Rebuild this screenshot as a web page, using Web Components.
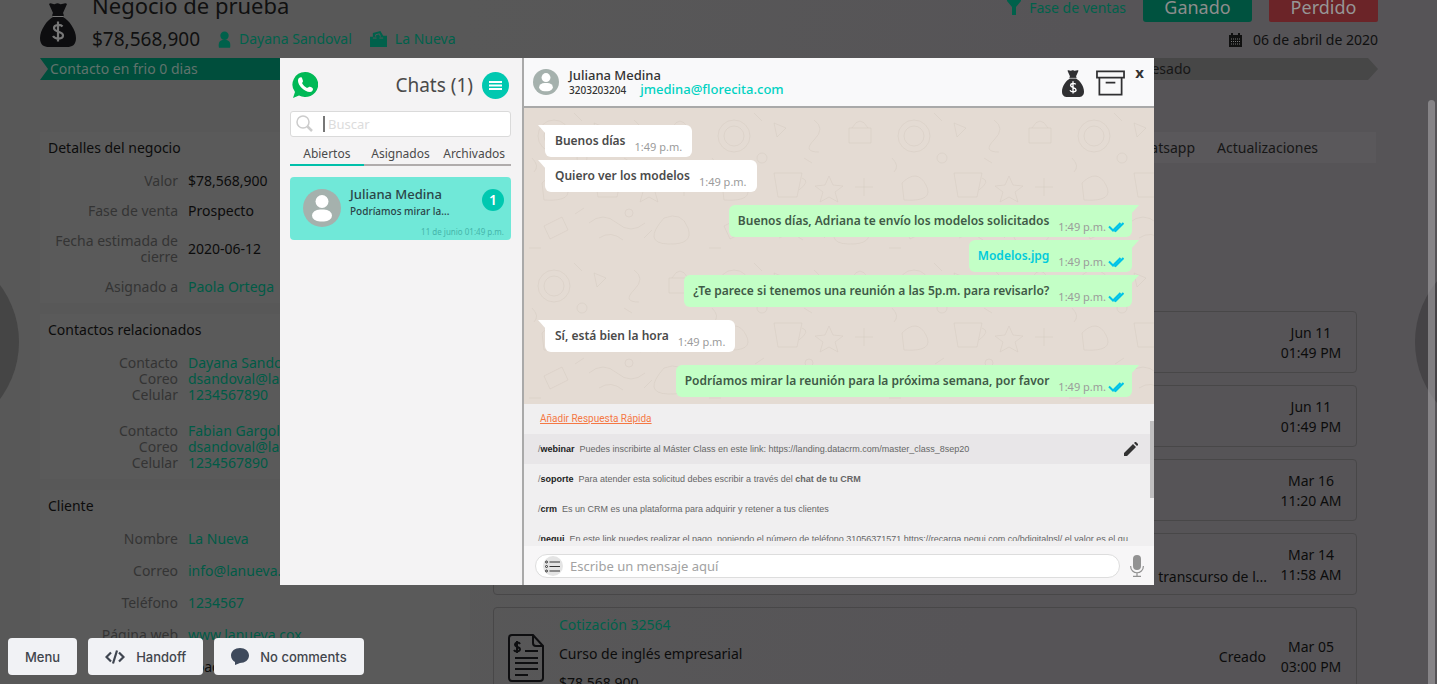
<!DOCTYPE html>
<html lang="es">
<head>
<meta charset="utf-8">
<title>Negocio de prueba</title>
<style>
html,body{margin:0;height:100%;overflow:hidden;background:#3a393a}
body{font-family:"Noto Sans","Open Sans",sans-serif;font-size:14px;color:#161616}
</style>
</head>
<body>
<crm-app></crm-app>
<script>
const icons = {
  bag: '<svg viewBox="0 0 36 44"><path fill="currentColor" d="M9 1c2-2 4 1 6 0s3-1 5 0 5-2 7 0l-4 9c1 2 1 3 0 4 6 3 13 13 13 21 0 7-4 9-9 9H9c-5 0-9-2-9-9 0-8 7-18 13-21-1-1-1-2 0-4z"/><path d="M12.500 13.500h11" stroke="var(--cut)" stroke-width="1"/><path fill="none" stroke="var(--cut)" stroke-width="2.200" d="M22.500 23.500c-2-2.500-8.500-2-8.500 1.500 0 4.500 9 3 9 7.500 0 4-8 4-10 .5M18 18.500v20"/></svg>',
  person: '<svg viewBox="0 0 14 18"><circle cx="7" cy="5" r="4.500" fill="currentColor"/><path fill="currentColor" d="M1 18c-1-6 1-8 4-8.500h4c3 .5 5 2.500 4 8.500z"/></svg>',
  company: '<svg viewBox="0 0 18 17"><path fill="currentColor" d="M0 6h3V2l8-2 3 5h4v12H0z"/><path d="M6 6V4l4-1 1 3M3 7.500h4M10 7.500h4" stroke="#585858" fill="none"/></svg>',
  funnel: '<svg viewBox="0 0 14 16"><path fill="currentColor" d="M0 0h14v2L9 8v8H5V8L0 2z"/></svg>',
  calendar: '<svg viewBox="0 0 13 14"><path fill="currentColor" d="M0 2h2V0h2v2h5V0h2v2h2v12H0z"/><path stroke="#777" stroke-dasharray="1 1" d="M2 6h9M2 8.500h9M2 11h9"/></svg>',
  quote: '<svg viewBox="0 0 36 48" fill="none" stroke="currentColor" stroke-width="2"><path d="M4 1h21l10 11v32q0 3-3 3H4q-3 0-3-3V4q0-3 3-3zM25 1v8q0 3 3 3h7M17 17h13M7 24h23M7 29h23M7 35h23M7 41h13"/><path d="M12 10c-1-2-5-2-5 1 0 2 5 2 5 4 0 3-5 3-6 1M9 7v12"/></svg>',
  whatsapp: '<svg viewBox="0 0 26 26"><path fill="#00b956" d="M13 0a13 12.500 0 1 1-6 23.500L1 26l2-6A12.500 12.500 0 0 1 13 0z"/><path fill="#fff" d="M7 6c1-1 3-1 3 0l1 3c0 1-1 2-1 2 1 2 3 4 5 5l2-1c1-1 4 1 4 2s-1 3-3 3C12 20 6 13 6 9c0-1 0-2 1-3z"/></svg>',
  lines: '<svg viewBox="0 0 13 9"><path d="M0 1h13M0 4.500h13M0 8h13" stroke="#fff" stroke-width="1.800"/></svg>',
  search: '<svg viewBox="0 0 18 18" fill="none" stroke="#ccc" stroke-width="1.500"><circle cx="7" cy="7" r="6"/><path d="m11.500 11.500 4.500 4.500" stroke-width="2.500"/></svg>',
  avatar: '<svg viewBox="0 0 38 38"><circle cx="19" cy="19" r="19" fill="#a5b1ad"/><circle cx="19" cy="12.500" r="6.500" fill="#fff"/><rect x="9" y="20.500" width="20" height="12" rx="8" ry="6" fill="#fff"/></svg>',
  archive: '<svg viewBox="0 0 30 26" fill="none" stroke="#303032" stroke-width="1.800"><path d="M1 1h28v6.500H1zM3.500 7.500V25h23V7.500M10 12.500h10"/></svg>',
  ticks: '<svg viewBox="0 0 16 12" fill="none" stroke="#00c3e8" stroke-width="2"><path d="m1 5.500 4 4L12.500 2M6.500 9.500l1 .5L15.500 2"/></svg>',
  pencil: '<svg viewBox="0 0 14 14" fill="#333"><path d="M0 14v-3l9-9 3 3-9 9zM10 1l1-1q.5-.3 1 0l2 2q.3.5 0 1l-1 1z"/></svg>',
  list: '<svg viewBox="0 0 20 20"><circle cx="10" cy="10" r="10" fill="#e4e4e4"/><g fill="none" stroke="#333"><path d="M6.500 6H17M6.500 10.500H17M6.500 15H17" stroke-width="1.200"/><circle cx="3.500" cy="6" r="1"/><circle cx="3.500" cy="10.500" r="1"/><circle cx="3.500" cy="15" r="1"/></g></svg>',
  mic: '<svg viewBox="0 0 14 22"><rect x="3" width="8" height="15" rx="4" fill="#929292"/><path d="M.6 11c0 9 12.800 9 12.800 0M7 17.500V21M3 21.400h8" fill="none" stroke="#929292" stroke-width="1.200"/></svg>',
  code: '<svg viewBox="0 0 20 14" fill="none" stroke="#3f4550" stroke-width="2.200"><path d="M6 2.500 1.500 7 6 11.500M14 2.500 18.500 7 14 11.500M12 .5 8 13.500"/></svg>',
  comment: '<svg viewBox="0 0 18 17" fill="#3f4a5c"><path d="M9 0c5 0 9 3 9 7.500S14 15 9 15l-5 2v-3C2 13 0 10.500 0 7.500 0 3 4 0 9 0z"/></svg>'
};

function define(name, css, html) {
  customElements.define(name, class extends HTMLElement {
    connectedCallback() {
      if (this.shadowRoot) return;
      const root = this.attachShadow({ mode: 'open' });
      root.innerHTML = `<style>*{box-sizing:border-box}a{color:inherit;text-decoration:none}button{font:inherit;color:inherit;border:0;padding:0;background:none}${css}</style>` +
        (typeof html === 'function' ? html(this) : html);
    }
  });
}
const at = (el, name) => el.getAttribute(name) || '';

define('ui-icon', `:host{display:block;flex:none;width:var(--w,16px);height:var(--h,16px)}svg{display:block;width:100%;height:100%}`,
  el => icons[at(el, 'name')]);

/* ---------- deal page ---------- */
define('deal-header', `
:host{display:flex;justify-content:space-between;height:66px;padding:0 59px 0 40px;color:#101010}
.left,.who,.line,.actions,.date{display:flex}
.left{gap:16px}
.bag{--w:36px;--h:44px;--cut:#777;margin-top:11px;color:#0d0d0f}
h1{font-size:22px;line-height:26px;font-weight:400;margin:0;padding-top:0}
.line{align-items:center;gap:18px;height:28px;margin-top:7px;color:#00614b;line-height:20px}
strong{font-size:19px;font-weight:400;color:#101010;line-height:28px}
.line a{display:flex;align-items:center;gap:8px}
.line .who{--w:13px;--h:17px}.line .co{--w:17px;--h:16px}
.right{display:flex;flex-direction:column;align-items:flex-end}
.actions{gap:17px;align-items:center;color:#00614b}
.actions span{display:flex;align-items:center;gap:8px;--w:14px;--h:16px}
button{width:109px;height:30px;border-radius:0 0 3px 3px;font-size:18px;background:#00523f;color:#8d8d8d}
button.lost{background:#6b2428;color:#969696;border-radius:0 0 2px 2px}
.date{align-items:center;gap:11px;line-height:20px;margin-top:8px;--w:13px;--h:14px}
`, `
<div class="left"><ui-icon class="bag" name="bag"></ui-icon><div><h1>Negocio de prueba</h1>
<div class="line"><strong>$78,568,900</strong><a class="who" href="#"><ui-icon name="person"></ui-icon>Dayana Sandoval</a><a class="co" href="#"><ui-icon name="company"></ui-icon>La Nueva</a></div></div></div>
<div class="right"><div class="actions"><span><ui-icon name="funnel"></ui-icon>Fase de ventas</span><button>Ganado</button><button class="lost">Perdido</button></div>
<div class="date"><ui-icon name="calendar"></ui-icon>06 de abril de 2020</div></div>`);

define('stage-bar', `
:host{display:flex;height:22px;margin:0 59px 0 40px;line-height:22px;clip-path:polygon(0 0,calc(100% - 10px) 0,100% 50%,calc(100% - 10px) 100%,0 100%,8px 50%)}
span{flex:1}.on{background:#004e3c;color:#61736d;padding-left:10px}.off{background:#474747;text-align:right;padding-right:187px}
`, `<span class="on">Contacto en frio 0 dias</span><span class="off">Interesado</span>`);

define('info-panel', `
:host{display:block;background:#5a5a5a;padding:8px}
h2{margin:0 0 17px;font-size:14px;line-height:16px;font-weight:400;color:#0c0c0c}
div{display:flex;flex-direction:column;gap:var(--gap,14px)}
`, el => `<h2>${at(el, 'heading')}</h2><div><slot></slot></div>`);

define('info-row', `
:host{display:grid;grid-template-columns:130px 1fr;gap:10px;align-items:center;line-height:16px;white-space:nowrap}
.k{text-align:right;color:#343434;white-space:normal}
.v{color:#0c0c0c}a{color:#005b46}
`, el => `<span class="k">${at(el, 'label')}</span><span class="v">${el.hasAttribute('link') ? `<a href="#">${at(el, 'value')}</a>` : at(el, 'value')}</span>`);

define('info-group', `:host{display:block}`, `<slot></slot>`);

define('activity-card', `
:host{display:flex;align-items:center;min-height:62px;padding:2px 14px 0 14px;border:1px solid #484748;border-radius:4px;line-height:20px;color:#0c0c0c}
.main{flex:1;min-width:0;display:flex}
time{width:62px;text-align:center}
.note{margin:24px 13px 0 0}
:host([tall]){min-height:100px;padding-top:0}
:host([tall]) .note{margin:0 14px 0 0}
`, el => `<div class="main"><slot></slot></div><span class="note">${at(el, 'note')}</span><time>${at(el, 'day')}<br>${at(el, 'hour')}</time>`);

define('quote-summary', `
:host{display:flex;gap:15px;--w:36px;--h:48px;align-items:center;padding-top:2px}
p{margin:0 0 9px;line-height:20px}a{color:#00614b}ui-icon{color:#0e0e10}
`, `<ui-icon name="quote"></ui-icon><div><p><a href="#">Cotización 32564</a></p><p>Curso de inglés empresarial</p><p>$78,568,900</p></div>`);

define('deal-page', `
:host{display:block;height:100vh;overflow:hidden;background:linear-gradient(100deg,#585858 30%,#565457 70%)}
.scroll{margin-top:-8px}
.body{display:grid;grid-template-columns:minmax(0,430px) minmax(0,1fr);gap:23px;padding:52px 61px 0 40px}
.info{display:flex;flex-direction:column;gap:11px}
.tabs{display:flex;justify-content:flex-end;gap:22px;height:31px;align-items:center;padding-right:58px;background:#5a585b}
.cards{display:flex;flex-direction:column;gap:12px;margin:148px 19px 0 0}
`, `
<div class="scroll"><deal-header></deal-header><stage-bar></stage-bar>
<div class="body"><div class="info">
<info-panel heading="Detalles del negocio"><info-row label="Valor" value="$78,568,900"></info-row><info-row label="Fase de venta" value="Prospecto"></info-row><info-row label="Fecha estimada de cierre" value="2020-06-12"></info-row><info-row label="Asignado a" value="Paola Ortega" link></info-row></info-panel>
<info-panel heading="Contactos relacionados" style="--gap:20px">
<info-group><info-row label="Contacto" value="Dayana Sandoval" link></info-row><info-row label="Coreo" value="dsandoval@lanueva.com" link></info-row><info-row label="Celular" value="1234567890" link></info-row></info-group>
<info-group><info-row label="Contacto" value="Fabian Gargola" link></info-row><info-row label="Coreo" value="dsandoval@lanueva.com" link></info-row><info-row label="Celular" value="1234567890" link></info-row></info-group></info-panel>
<info-panel heading="Cliente" style="--gap:16px"><info-row label="Nombre" value="La Nueva" link></info-row><info-row label="Correo" value="info@lanueva.cox" link></info-row><info-row label="Teléfono" value="1234567" link></info-row><info-row label="Página web" value="www.lanueva.cox" link></info-row><info-row label="Ciudad" value="Soacha"></info-row></info-panel>
</div><div><nav class="tabs"><a href="#">Whatsapp</a><a href="#">Actualizaciones</a></nav>
<div class="cards"><activity-card day="Jun 11" hour="01:49 PM"></activity-card><activity-card day="Jun 11" hour="01:49 PM"></activity-card><activity-card day="Mar 16" hour="11:20 AM"></activity-card><activity-card day="Mar 14" hour="11:58 AM" note="el transcurso de l..."></activity-card><activity-card tall day="Mar 05" hour="03:00 PM" note="Creado"><quote-summary></quote-summary></activity-card></div></div></div></div>`);

/* ---------- chat dialog ---------- */
define('chat-item', `
:host{display:grid;grid-template-columns:38px 1fr auto;gap:0 9px;padding:8px 7px 0 13px;height:63px;background:#70e8d8;border-radius:4px;color:#2b4548}
ui-icon{--w:38px;--h:38px;margin-top:4px}
b,span,time{display:block}b{font-size:13px;line-height:18px;font-weight:500}
span{font-size:10px;line-height:17px;font-weight:500}
.n{width:22px;height:22px;margin-top:4px;border-radius:50%;background:#00c8b0;color:#fff;font-size:14px;font-style:normal;font-weight:600;line-height:22px;text-align:center}
time{grid-column:1/-1;text-align:right;font-size:8px;line-height:10px;color:#45b5aa;margin-top:-3px}
`, `<ui-icon name="avatar"></ui-icon><div><b>Juliana Medina</b><span>Podríamos mirar la...</span></div><i class="n">1</i><time>11 de junio 01:49 p.m.</time>`);

define('chat-list', `
:host{display:block;background:#f4f3f4;border-right:2px solid #a9a9a9;padding:13px 11px 0 10px;color:#4a4a4a}
header{display:flex;align-items:center;height:28px}
h2{margin:0 9px 0 auto;font-size:19px;font-weight:400;line-height:28px}
.wa{--w:26px;--h:26px;margin-left:2px}
.menu{width:27px;height:27px;border-radius:50%;background:#00c8b0;display:flex;align-items:center;justify-content:center;margin-right:2px;--w:13px;--h:9px}
label{display:flex;align-items:center;height:26px;margin-top:12px;border:1px solid #dadada;border-radius:3px;background:#fff;padding-left:5px;--w:18px;--h:18px}
label i{width:2px;height:16px;background:#777;margin:0 3px 0 9px}
input{flex:1;min-width:0;border:0;padding:0;background:none;font:13px/18px "Noto Sans",sans-serif;outline:0}
input::placeholder{color:#dcdcdc}
nav{display:grid;grid-template-columns:1fr 1fr 1fr;margin:6px 0 11px;font-size:12px;text-align:center}
nav a{line-height:22px;border-bottom:2px solid #b0acac;height:23px}
nav a.on{border-color:#00c0aa}
`, `<header><ui-icon class="wa" name="whatsapp"></ui-icon><h2>Chats (1)</h2><button class="menu" aria-label="Menú de chats"><ui-icon name="lines"></ui-icon></button></header>
<label><ui-icon name="search"></ui-icon><i></i><input placeholder="Buscar" aria-label="Buscar"></label>
<nav><a class="on" href="#">Abiertos</a><a href="#">Asignados</a><a href="#">Archivados</a></nav><chat-item></chat-item>`);

define('chat-header', `
:host{display:flex;height:50px;background:#f9f9fa;border-bottom:2px solid #a9a9a9;padding:0 10px 0 9px;color:#333}
.av{--w:26px;--h:26px;margin:11px 10px 0 0}
.who{flex:1;padding-top:9px}
b{display:block;font-size:13px;line-height:17px;font-weight:500}
.sub{display:flex;gap:14px;font-size:10px;font-weight:500;line-height:12px;align-items:center}
a{font-size:13px;line-height:12px;color:#00d2c2;margin-top:-2px}
button{flex:none}
.bag{--w:22px;--h:27px;--cut:#fff;color:#303032;margin:12px 12px 0 0}
.box{--w:29px;--h:26px;margin:12px 10px 0 0}
.x{font:700 15px/20px "Open Sans",sans-serif;align-self:flex-start;margin-top:4px}
`, `<ui-icon class="av" name="avatar"></ui-icon><div class="who"><b>Juliana Medina</b><div class="sub">3203203204 <a href="#">jmedina@florecita.com</a></div></div>
<ui-icon class="bag" name="bag"></ui-icon><ui-icon class="box" name="archive"></ui-icon><button class="x" aria-label="Cerrar">x</button>`);

define('chat-bubble', `
:host{display:flex;position:relative;align-self:flex-start;align-items:center;height:32px;padding:0 10px;gap:9px;background:#fff;border-radius:0 6px 6px 6px;color:#4a4a4a;font-size:12px;font-weight:600;line-height:20px;--w:16px;--h:12px}
:host([sent]){align-self:flex-end;background:#c3ffc6;border-radius:6px 0 6px 6px;padding:0 8px 0 9px;color:#3f5a46}
:host::before{content:"";position:absolute;top:0;left:-7px;width:8px;height:9px;background:#fff;clip-path:polygon(0 0,100% 0,100% 100%)}
:host([sent])::before{left:auto;right:-7px;background:#c3ffc6;clip-path:polygon(0 0,100% 0,0 100%)}
:host([gap]){margin-top:10px}
small{display:flex;align-items:center;gap:2px;font:11px/16px "Noto Sans",sans-serif;color:#9b9b9b;padding-top:11px}
`, el => `<span><slot></slot></span><small>1:49 p.m.${el.hasAttribute('sent') ? '<ui-icon name="ticks"></ui-icon>' : ''}</small>`);

define('chat-log', `
:host{display:flex;flex-direction:column;gap:3px;height:296px;padding:17px 22px 0 21px;background:#e4dbd3 url("data:image/svg+xml,%3Csvg xmlns='http://www.w3.org/2000/svg' width='180' height='150' fill='none' stroke='%23cfc5bc' stroke-opacity='.38'%3E%3Ccircle cx='30' cy='28' r='16'/%3E%3Ccircle cx='30' cy='28' r='10'/%3E%3Cpath d='m70 15 12 5-9 9zM110 12q12 8 0 20t5 12M145 20h22v15h-22zM148 20q8-14 16 0M18 75q15-15 24 2t-22 15zM70 65h28l-5 24H74zM98 70q9 3-3 12M125 68l4 9 10 1-8 6 3 10-9-5-9 5 3-10-8-6 10-1zM160 70v18M151 79h18M20 118l18-9 6 13-18 9zM65 115q14-12 28 0t28 0M75 130q12-8 24 2M140 110q18-7 24 10t-20 16-4-26M50 5l8 8M100 50l8 5M8 50q8 8 2 14M120 130l8-8M5 140h12M60 100l-9 6'/%3E%3Ccircle cx='58' cy='50' r='5'/%3E%3Ccircle cx='105' cy='105' r='4'/%3E%3C/svg%3E")}
chat-bubble a{color:#00cbdc}
`, `<chat-bubble>Buenos días</chat-bubble><chat-bubble>Quiero ver los modelos</chat-bubble>
<chat-bubble gap sent>Buenos días, Adriana te envío los modelos solicitados</chat-bubble>
<chat-bubble sent><a href="#">Modelos.jpg</a></chat-bubble><chat-bubble sent>¿Te parece si tenemos una reunión a las 5p.m. para revisarlo?</chat-bubble>
<chat-bubble gap>Sí, está bien la hora</chat-bubble><chat-bubble gap sent>Podríamos mirar la reunión para la próxima semana, por favor</chat-bubble>`);

define('quick-reply', `
:host{display:flex;flex:none;align-items:center;height:30px;gap:5px;padding:0 16px 0 14px;font:9px/12px "Liberation Sans",Arial,sans-serif;color:#666;--w:14px;--h:14px;white-space:nowrap}
:host([on]){background:#e8e6e8}
strong{color:#222}strong i{font-weight:400;font-style:normal;color:#777}
ui-icon{margin-left:auto}
`, el => `<strong><i>/</i>${at(el, 'key')}</strong><span><slot></slot></span>${el.hasAttribute('on') ? '<ui-icon name="pencil"></ui-icon>' : ''}`);

define('quick-replies', `
:host{display:block;position:relative;height:137px;overflow:hidden;background:#f0eff0}
.add{display:block;font:10px/30px Roboto,sans-serif;color:#f57844;text-decoration:underline;padding-left:16px}
.bar{position:absolute;right:0;top:17px;width:4px;height:77px;background:#c0bfc0}
`, `<a class="add" href="#">Añadir Respuesta Rápida</a>
<quick-reply on key="webinar">Puedes inscribirte al Máster Class en este link: https://landing.datacrm.com/master_class_8sep20</quick-reply>
<quick-reply key="soporte">Para atender esta solicitud debes escribir a través del <b>chat de tu CRM</b></quick-reply>
<quick-reply key="crm">Es un CRM es una plataforma para adquirir y retener a tus clientes</quick-reply>
<quick-reply key="nequi">En este link puedes realizar el pago, poniendo el número de teléfono 31056371571 https://recarga.nequi.com.co/bdigitalpsl/ el valor es el qu</quick-reply><i class="bar"></i>`);

define('message-box', `
:host{display:flex;align-items:center;gap:10px;flex:1;min-height:44px;padding:0 10px 0 11px;border-top:5px solid #f0eff0;background:#f7f6f7;--w:14px;--h:22px}
label{flex:1;display:flex;align-items:center;gap:7px;height:24px;border:1px solid #ddd;border-radius:12px;background:#fff;padding-left:7px}
label ui-icon{--w:20px;--h:20px}
input{flex:1;border:0;padding:0;background:none;outline:0;font:13px/18px "Noto Sans",sans-serif}
input::placeholder{color:#a2a2a2}
`, `<label><ui-icon name="list"></ui-icon><input placeholder="Escribe un mensaje aquí" aria-label="Mensaje"></label><ui-icon name="mic"></ui-icon>`);

define('chat-dialog', `
:host{display:grid;grid-template-columns:244px minmax(0,1fr)}
section{display:flex;flex-direction:column}
`, `<chat-list></chat-list><section><chat-header></chat-header><chat-log></chat-log><quick-replies></quick-replies><message-box></message-box></section>`);

/* ---------- prototype viewer controls ---------- */
define('viewer-button', `
:host{display:block}
button{display:flex;align-items:center;height:37px;padding:0 17px;gap:11px;border-radius:4px;background:#f1f2f5;color:#41454c;font:500 13px/18px Inter,sans-serif;--w:20px;--h:14px}
:host([wide]) ui-icon{--w:18px;--h:17px}
`, el => `<button>${at(el, 'icon') ? `<ui-icon name="${at(el, 'icon')}"></ui-icon>` : ''}<slot></slot></button>`);

define('crm-app', `
:host{display:block;position:relative;height:100vh;overflow:hidden}
chat-dialog{position:absolute;top:58px;left:280px;right:283px;z-index:2}
.round{position:absolute;top:247px;width:190px;height:190px;border-radius:50%;background:#454545}
.prev{left:-171px}.next{right:-168px;background:#454346}
.scrollbar{position:absolute;right:2px;top:100px;bottom:0;width:7px;border-radius:4px 4px 0 0;background:rgba(160,158,162,.65)}
.tools{position:absolute;left:8px;bottom:9px;z-index:3;display:flex;gap:11px}
`, `<deal-page></deal-page><button class="round prev" aria-label="Anterior"></button><button class="round next" aria-label="Siguiente"></button><i class="scrollbar"></i>
<chat-dialog></chat-dialog>
<div class="tools"><viewer-button>Menu</viewer-button><viewer-button icon="code">Handoff</viewer-button><viewer-button wide icon="comment">No comments</viewer-button></div>`);
</script>
</body>
</html>
